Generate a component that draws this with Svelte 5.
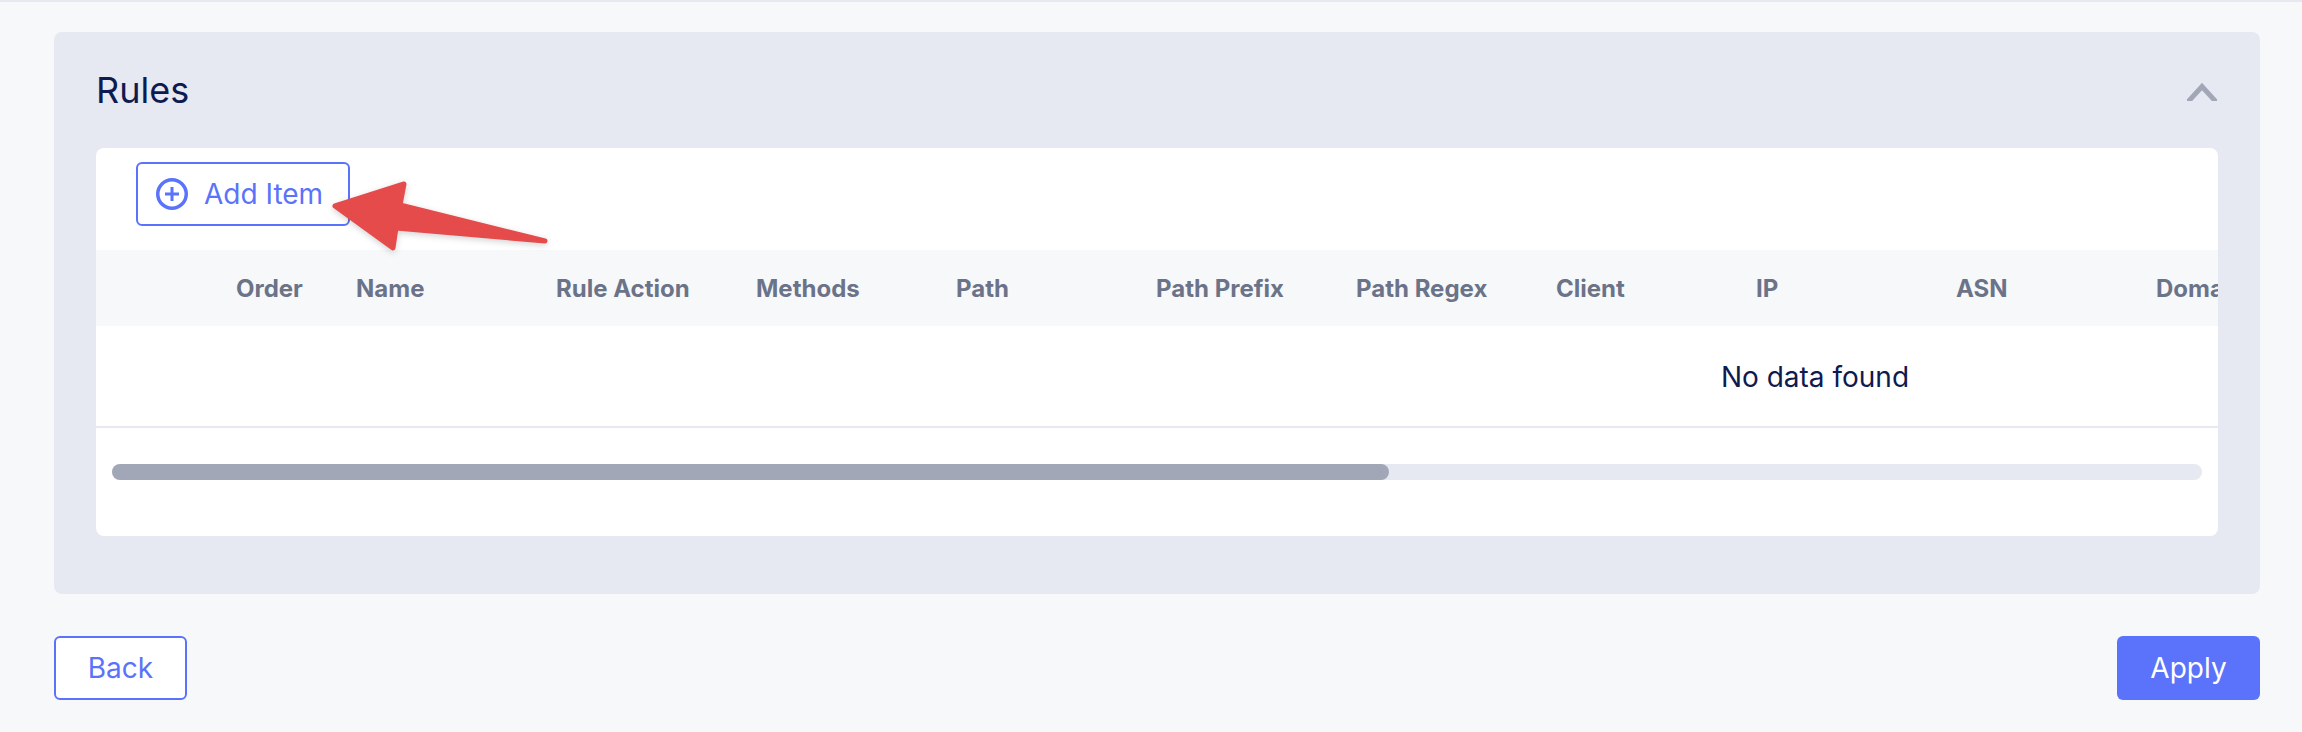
<script lang="ts">
	const columns = [
		'',
		'Order',
		'Name',
		'Rule Action',
		'Methods',
		'Path',
		'Path Prefix',
		'Path Regex',
		'Client',
		'IP',
		'ASN',
		'Domain'
	];
	let scrolled = $state(61.1);
</script>

<div class="page">
	<section class="panel">
		<header class="panel-head">
			<h2>Rules</h2>
			<svg class="chevron" width="30" height="18" viewBox="0 0 30 18" aria-hidden="true">
				<path d="M-1 21 L15 3.5 L31 21" fill="none" stroke="currentColor" stroke-width="5" />
			</svg>
		</header>

		<div class="card">
			<div class="toolbar">
				<button class="outline add" type="button">
					<svg width="32" height="32" viewBox="0 0 32 32" aria-hidden="true">
						<circle cx="16" cy="16" r="14.25" fill="none" stroke="currentColor" stroke-width="3.5" />
						<path d="M16 9 V23 M9 16 H23" fill="none" stroke="currentColor" stroke-width="3" />
					</svg>
					<span>Add Item</span>
				</button>
			</div>

			<div class="table-wrap">
				<table>
					<colgroup>
						<col class="c-select" />
						<col class="c-order" />
						<col class="c-name" />
						<col span="8" class="c-std" />
						<col class="c-rest" />
					</colgroup>
					<thead>
						<tr>
							{#each columns as col}
								<th>{col}</th>
							{/each}
						</tr>
					</thead>
					<tbody>
						<tr>
							<td colspan={columns.length}>No data found</td>
						</tr>
					</tbody>
				</table>
			</div>

			<div class="scroll-area">
				<div class="track">
					<div class="thumb" style="width: {scrolled}%"></div>
				</div>
			</div>
		</div>
	</section>

	<footer class="actions">
		<button class="outline back" type="button">Back</button>
		<button class="primary" type="button">Apply</button>
	</footer>

	<svg class="arrow" width="240" height="90" viewBox="0 0 240 90" aria-hidden="true">
		<path
			d="M7 31 L76 9 L72 30 L217 66 L68 53 L65 73 Z"
			fill="#e54b4b"
			stroke="#e54b4b"
			stroke-width="5"
			stroke-linejoin="round"
		/>
	</svg>
</div>

<style>
	:global(body) {
		margin: 0;
		background: #f7f8fa;
	}

	.page {
		position: relative;
		box-sizing: border-box;
		height: 732px;
		padding: 30px 42px 0 54px;
		border-top: 2px solid #e6e9f2;
		background: #f7f8fa;
		font-family: Inter, 'Liberation Sans', sans-serif;
	}

	.panel {
		height: 562px;
		box-sizing: border-box;
		padding: 0 42px;
		background: #e6e9f2;
		border-radius: 8px;
	}

	.panel-head {
		display: flex;
		align-items: center;
		justify-content: space-between;
		height: 116px;
	}

	h2 {
		margin: 0;
		font-size: 36px;
		font-weight: 400;
		color: #0f1a4f;
	}

	.chevron {
		color: #a1a7b6;
		margin-right: 1px;
		margin-top: 4px;
	}

	.card {
		height: 388px;
		background: #fff;
		border-radius: 8px;
		overflow: hidden;
	}

	.toolbar {
		padding: 14px 0 24px 40px;
	}

	button {
		font-family: inherit;
		font-size: 28px;
		border-radius: 6px;
		height: 64px;
		box-sizing: border-box;
	}

	.outline {
		background: #fff;
		color: #5a73fa;
		border: 2px solid #5a73fa;
	}

	.add {
		display: flex;
		align-items: center;
		gap: 16px;
		width: 214px;
		padding: 0 0 0 18px;
		white-space: nowrap;
	}

	.add svg {
		flex: none;
	}

	.table-wrap {
		overflow: hidden;
		border-bottom: 2px solid #e6e9f2;
	}

	table {
		width: 3438px;
		table-layout: fixed;
		border-collapse: collapse;
	}

	.c-select {
		width: 116px;
	}

	.c-order {
		width: 120px;
	}

	.c-name {
		width: 200px;
	}

	.c-std {
		width: 200px;
	}

	th {
		height: 76px;
		padding: 0 0 0 24px;
		background: #f7f8fa;
		color: #6b7389;
		font-size: 24px;
		font-weight: 700;
		text-align: left;
		white-space: nowrap;
		overflow: hidden;
	}

	td {
		height: 100px;
		padding: 2px 0 0;
		box-sizing: border-box;
		color: #0f1a4f;
		font-size: 28px;
		text-align: center;
	}

	.scroll-area {
		padding: 36px 16px 0;
	}

	.track {
		height: 16px;
		border-radius: 8px;
		background: #e6e9f2;
	}

	.thumb {
		height: 100%;
		border-radius: 8px;
		background: #a1a7b6;
	}

	.actions {
		display: flex;
		justify-content: space-between;
		margin-top: 42px;
	}

	.back {
		width: 133px;
	}

	.primary {
		width: 143px;
		border: none;
		background: #5a73fa;
		color: #fff;
	}

	.arrow {
		position: absolute;
		left: 328px;
		top: 173px;
		filter: drop-shadow(0 2px 3px rgba(0, 0, 0, 0.18));
	}
</style>
